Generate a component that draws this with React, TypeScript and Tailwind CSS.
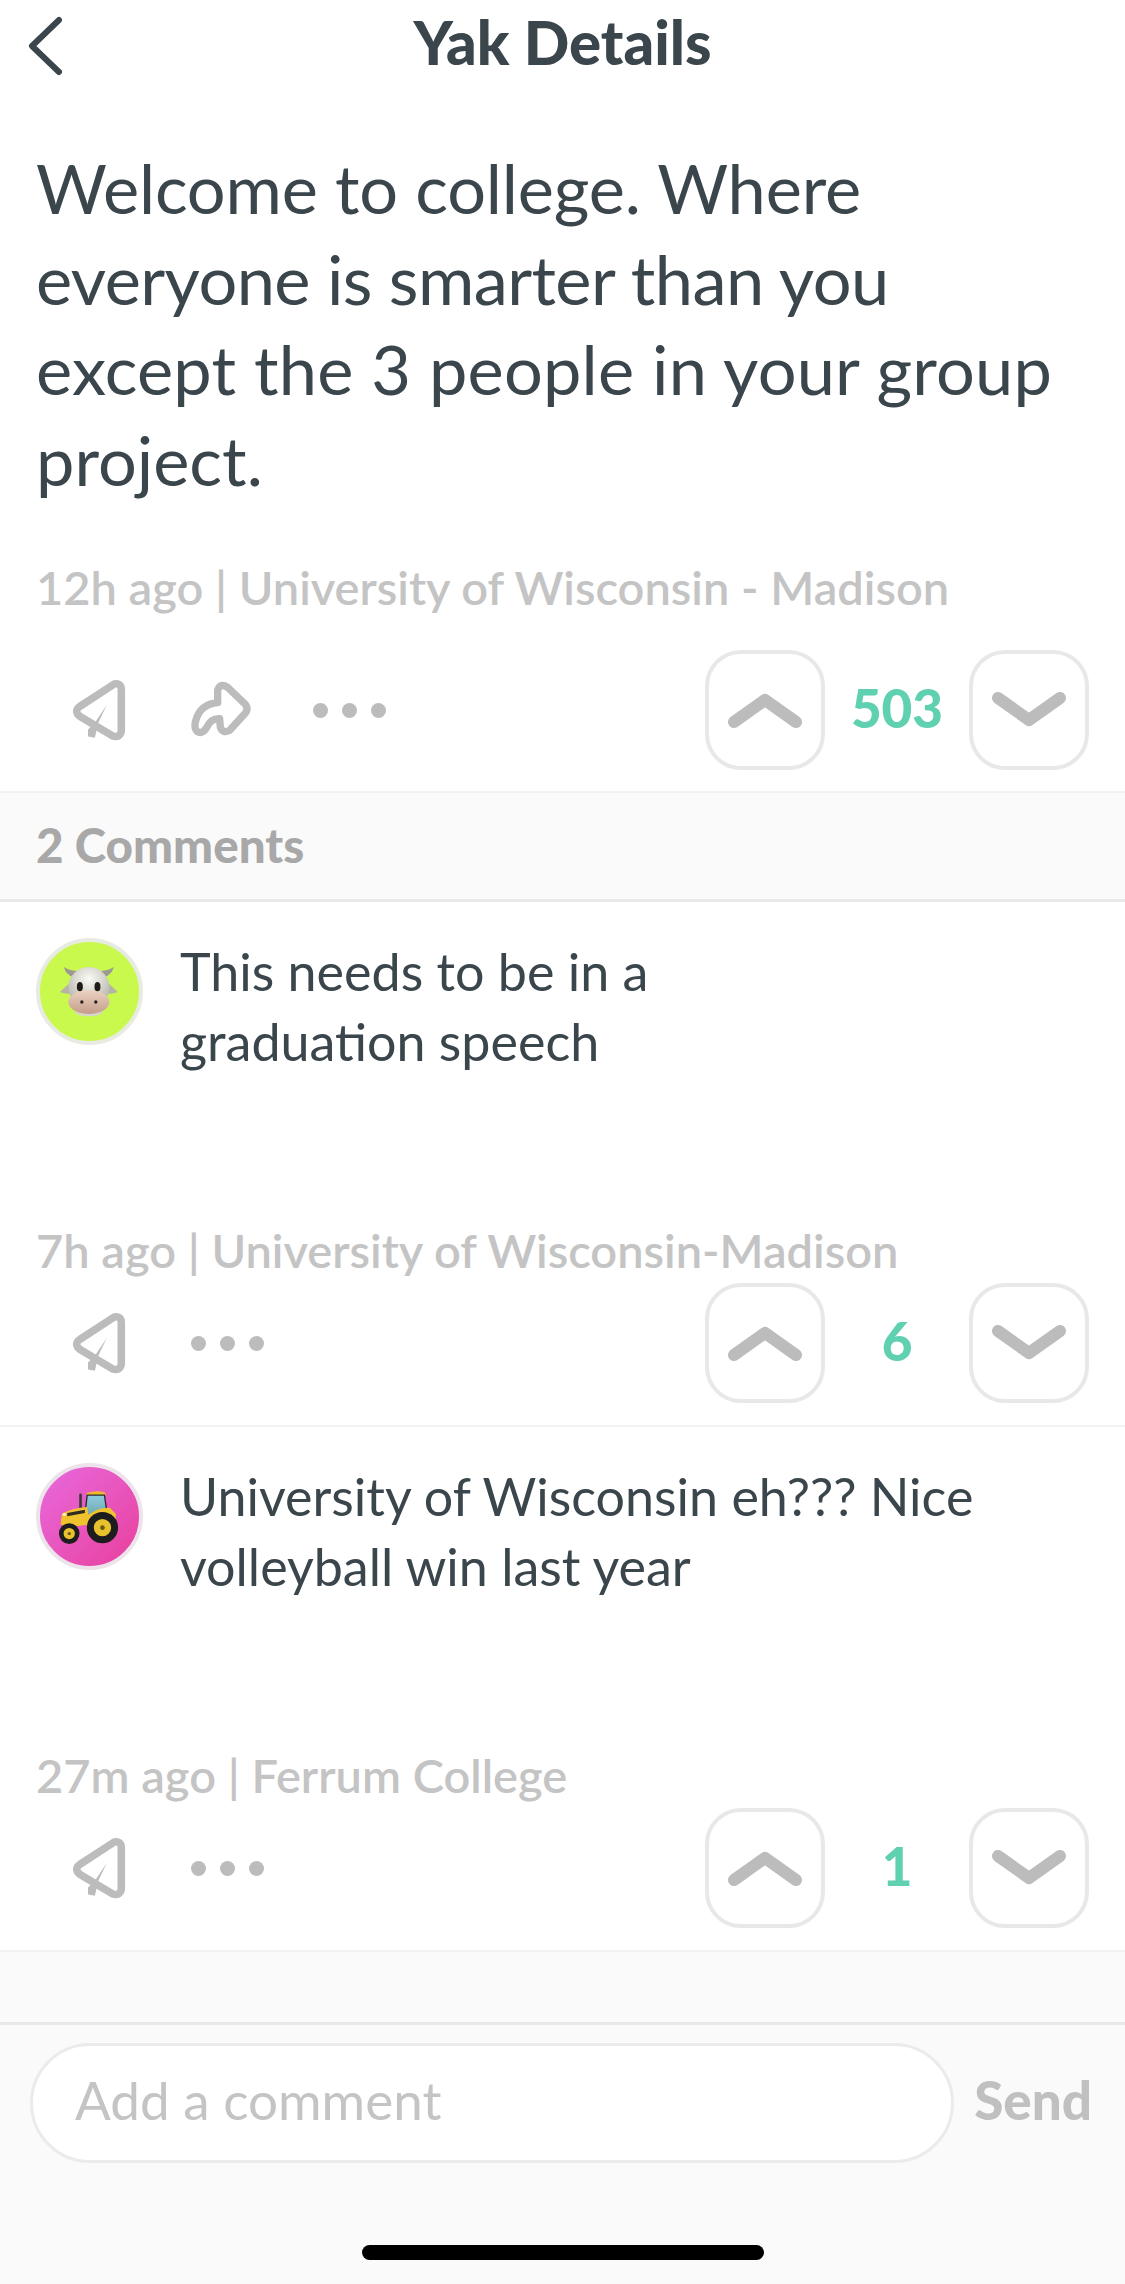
const FONT = "font-[Lato,'Open_Sans',sans-serif]";

function PlaneIcon() {
  return (
    <svg width="62" height="68" viewBox="210 170 180 198" fill="none">
      <path
        d="M345 193 Q365 190 365 210 L365 330 Q362 350 340 345 L245 288 Q225 272 245 258 Z"
        stroke="#bcbcbc"
        strokeWidth="22"
        strokeLinejoin="round"
      />
      <path d="M323 254 L298 306 L288 350 L268 346 L268 326 L288 306 Z" fill="#bcbcbc" />
    </svg>
  );
}

function ShareIcon() {
  return (
    <svg width="64" height="60" viewBox="570 182 192 180" fill="none">
      <path
        d="M656 250 L656 212 Q664 190 686 204 L740 256 Q748 268 740 280 L692 333 Q672 344 664 324 L662 298 Q636 296 622 326 Q610 346 594 336 Q584 326 590 304 Q604 254 656 250 Z"
        stroke="#bcbcbc"
        strokeWidth="22"
        strokeLinejoin="round"
      />
    </svg>
  );
}

function Dots() {
  return (
    <div className="flex items-center gap-[14px]">
      <div className="w-[15px] h-[15px] rounded-full bg-[#bcbcbc]" />
      <div className="w-[15px] h-[15px] rounded-full bg-[#bcbcbc]" />
      <div className="w-[15px] h-[15px] rounded-full bg-[#bcbcbc]" />
    </div>
  );
}

function VoteButton({ up }: { up: boolean }) {
  return (
    <div className="w-[120px] h-[120px] rounded-[36px] border-[4px] border-[#e8e8e8] bg-white flex items-center justify-center shrink-0">
      <svg width="76" height="40" viewBox="0 0 76 40" fill="none">
        <path
          d={up ? "M7 32 L38 10 L69 32" : "M7 8 L38 30 L69 8"}
          stroke="#bcbcbc"
          strokeWidth="12"
          strokeLinecap="round"
          strokeLinejoin="round"
        />
      </svg>
    </div>
  );
}

function Votes({ count }: { count: string }) {
  return (
    <div className="flex items-center">
      <VoteButton up />
      <div className="w-[144px] text-center text-[53px] leading-[60px] font-black text-[#5fd1b0] pb-[4px]">{count}</div>
      <VoteButton up={false} />
    </div>
  );
}

function CowFace() {
  return (
    <svg width="100" height="100" viewBox="30 65 298 296">
      <defs>
        <radialGradient id="cowHead" cx="0.5" cy="0.3" r="0.8">
          <stop offset="0" stopColor="#fbfbf6" />
          <stop offset="1" stopColor="#a8a69c" />
        </radialGradient>
        <linearGradient id="cowNose" x1="0" y1="0" x2="0" y2="1">
          <stop offset="0" stopColor="#ecd3c2" />
          <stop offset="1" stopColor="#c49d8b" />
        </linearGradient>
      </defs>
      <path d="M130 168 Q108 162 102 138 Q120 150 146 150 Z" fill="#9c9a90" />
      <path d="M224 168 Q246 162 252 138 Q234 150 208 150 Z" fill="#9c9a90" />
      <path d="M128 178 L90 213 Q110 222 132 215 Z" fill="#b5b3a8" />
      <path d="M226 178 L264 213 Q244 222 222 215 Z" fill="#b5b3a8" />
      <ellipse cx="177" cy="198" rx="62" ry="60" fill="url(#cowHead)" />
      <ellipse cx="177" cy="272" rx="42" ry="14" fill="#d8d6cc" />
      <ellipse cx="177" cy="243" rx="62" ry="36" fill="url(#cowNose)" />
      <ellipse cx="150" cy="197" rx="9" ry="14" fill="#1f1b18" />
      <ellipse cx="203" cy="197" rx="9" ry="14" fill="#1f1b18" />
      <circle cx="156" cy="243" r="5" fill="#2b1d18" />
      <circle cx="198" cy="243" r="5" fill="#2b1d18" />
    </svg>
  );
}

function Tractor() {
  return (
    <svg width="100" height="100" viewBox="30 52 298 296">
      <defs>
        <linearGradient id="cabGlass" x1="0" y1="0" x2="0" y2="1">
          <stop offset="0" stopColor="#8ecbe0" />
          <stop offset="1" stopColor="#6aa3a6" />
        </linearGradient>
      </defs>
      <path d="M152 133 L152 172" stroke="#3a3a3a" strokeWidth="8" strokeLinecap="round" />
      <path d="M170 128 Q198 118 226 126 L228 136 L170 136 Z" fill="#edb92c" />
      <path d="M172 134 L224 134 L232 190 L164 204 Z" fill="url(#cabGlass)" stroke="#2b2b2b" strokeWidth="4" />
      <path d="M96 190 Q130 172 172 170 L180 222 L112 232 L92 222 Z" fill="#f0c22e" />
      <path d="M112 188 L165 178 L165 188 L112 198 Z" fill="#2f2b20" />
      <path d="M164 204 Q196 170 240 172 L258 190 L258 206 L170 226 Z" fill="#f0c22e" />
      <circle cx="218" cy="232" r="47" fill="#1d1d1d" />
      <circle cx="218" cy="232" r="26" fill="#e8c22e" />
      <circle cx="218" cy="232" r="7" fill="#6d5a12" />
      <circle cx="118" cy="250" r="31" fill="#1d1d1d" />
      <circle cx="118" cy="250" r="17" fill="#e8c22e" />
      <circle cx="118" cy="250" r="5" fill="#6d5a12" />
      <circle cx="103" cy="192" r="5" fill="#fff6cc" />
    </svg>
  );
}

function Comment({
  avatar,
  avatarBg,
  lines,
  meta,
  count,
}: {
  avatar: React.ReactNode;
  avatarBg: string;
  lines: string[];
  meta: string;
  count: string;
}) {
  return (
    <div className="bg-white border-b-[2px] border-[#f2f2f2] pt-[36px] pb-[22px] pl-[36px] pr-[36px]">
      <div className="flex h-[282px] items-start gap-[37px]">
        <div className={`w-[107px] h-[107px] rounded-full border-[4px] flex items-center justify-center overflow-hidden shrink-0 ${avatarBg}`}>
          {avatar}
        </div>
        <div className="text-[52px] leading-[70px] text-[#3a464c] -mt-[2px]">
          {lines.map((l) => (
            <div key={l}>{l}</div>
          ))}
        </div>
      </div>
      <div className="text-[47px] leading-[60px] font-semibold text-[#c4c4c4]">{meta}</div>
      <div className="flex items-center justify-between mt-[3px]">
        <div className="flex items-center gap-[61px] pl-[32px]">
          <PlaneIcon />
          <Dots />
        </div>
        <Votes count={count} />
      </div>
    </div>
  );
}

export default function App() {
  return (
    <div className={`w-[1125px] h-[2284px] bg-[#fafafa] flex flex-col overflow-hidden ${FONT}`}>
      <div className="bg-white">
        <div className="h-[90px] flex items-center justify-center relative">
          <svg className="absolute left-[26px] top-[16px]" width="38" height="60" viewBox="0 0 38 60" fill="none">
            <path d="M33 4 L6 30 L33 56" stroke="#3a464c" strokeWidth="6" strokeLinecap="round" strokeLinejoin="round" />
          </svg>
          <div className="text-[60px] font-black text-[#3a464c] pb-[6px]">Yak Details</div>
        </div>
        <div className="px-[36px] pt-[53px] text-[68.5px] leading-[90.5px] text-[#3a464c]">
          <div className="tracking-[-0.17px]">Welcome to college. Where</div>
          <div className="tracking-[-0.57px]">everyone is smarter than you</div>
          <div className="tracking-[0.2px]">except the 3 people in your group</div>
          <div>project.</div>
        </div>
        <div className="px-[36px] mt-[52px] text-[47px] leading-[60px] font-semibold text-[#c4c4c4]">
          12h ago | University of Wisconsin - Madison
        </div>
        <div className="flex items-center justify-between pl-[68px] pr-[36px] mt-[33px] pb-[21px] border-b-[2px] border-[#f2f2f2]">
          <div className="flex items-center">
            <PlaneIcon />
            <div className="ml-[59px]">
              <ShareIcon />
            </div>
            <div className="ml-[60px]">
              <Dots />
            </div>
          </div>
          <Votes count="503" />
        </div>
      </div>

      <div className="h-[109px] border-b-[3px] border-[#e8e8e8] pl-[36px] pb-[2px] flex items-center text-[47.5px] font-black text-[#a8a8a8]">
        2 Comments
      </div>

      <Comment
        avatar={<CowFace />}
        avatarBg="bg-[#c8f94c] border-[#e8ebe2]"
        lines={["This needs to be in a", "graduation speech"]}
        meta="7h ago | University of Wisconsin-Madison"
        count="6"
      />
      <Comment
        avatar={<Tractor />}
        avatarBg="bg-gradient-to-br from-[#e868de] to-[#e83e9c] border-[#ece4ea]"
        lines={["University of Wisconsin eh??? Nice", "volleyball win last year"]}
        meta="27m ago | Ferrum College"
        count="1"
      />

      <div className="mt-auto border-t-[3px] border-[#e8e8e8] pt-[18px] h-[262px] flex flex-col">
        <div className="flex items-center pl-[30px] pr-[33px]">
          <div className="w-[924px] h-[120px] rounded-[60px] border-[3px] border-[#ebebeb] bg-white flex items-center pl-[42px] pb-[6px] text-[53px] text-[#c4c4c4]">
            Add a comment
          </div>
          <div className="ml-auto text-[53px] font-black text-[#c0c0c0] pb-[6px]">Send</div>
        </div>
        <div className="w-[402px] h-[15px] rounded-full bg-black mx-auto mt-[82px]" />
      </div>
    </div>
  );
}
